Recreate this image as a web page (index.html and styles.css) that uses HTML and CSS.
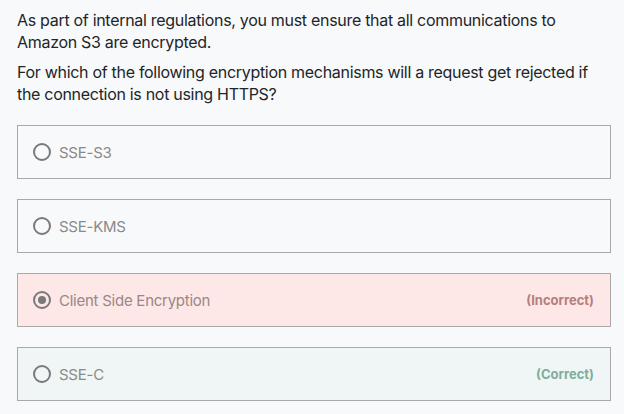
FILE: index.html
```html
<!DOCTYPE html>
<html>
<head>
<meta charset="utf-8">
<link rel="stylesheet" href="styles.css">
</head>
<body>
<div class="question">
  <p class="para">As part of internal regulations, you must ensure that all communications to Amazon S3 are encrypted.</p>
  <p class="para">For which of the following encryption mechanisms will a request get rejected if the connection is not using HTTPS?</p>
</div>
<div class="options">
  <div class="option">
    <span class="radio"></span>
    <span class="label">SSE-S3</span>
  </div>
  <div class="option">
    <span class="radio"></span>
    <span class="label">SSE-KMS</span>
  </div>
  <div class="option incorrect">
    <span class="radio checked"></span>
    <span class="label">Client Side Encryption</span>
    <span class="status">(Incorrect)</span>
  </div>
  <div class="option correct">
    <span class="radio"></span>
    <span class="label">SSE-C</span>
    <span class="status">(Correct)</span>
  </div>
</div>
</body>
</html>
```

FILE: styles.css
```css
html, body {
  margin: 0;
  padding: 0;
  background: #f8f9fa;
}
body {
  font-family: Inter, "Noto Sans", sans-serif;
  color: #212529;
  padding: 9px 13px 0 17px;
}
.question {
  margin-bottom: 20px;
}
.para {
  margin: 0 0 8px 0;
  font-size: 16px;
  line-height: 22px;
  letter-spacing: -0.3px;
}
.options {
  display: flex;
  flex-direction: column;
  gap: 20px;
}
.option {
  display: flex;
  align-items: center;
  height: 52px;
  border: 1px solid #a9a9a9;
  padding: 0 16px 0 15px;
  background: #f8f9fa;
}
.option.incorrect {
  background: #fde8e7;
}
.option.correct {
  background: #eff6f5;
}
.radio {
  width: 14px;
  height: 14px;
  border: 2px solid #7a7a7a;
  border-radius: 50%;
  box-sizing: content-box;
  margin-right: 8px;
  flex: none;
  position: relative;
}
.radio.checked::after {
  content: "";
  position: absolute;
  left: 3px;
  top: 3px;
  width: 8px;
  height: 8px;
  border-radius: 50%;
  background: #7a7a7a;
}
.label {
  font-size: 15px;
  color: #8a8a8a;
  letter-spacing: -0.25px;
}
.incorrect .label {
  color: #9a8686;
}
.status {
  margin-left: auto;
  font-size: 13px;
  font-weight: 700;
}
.incorrect .status {
  color: #b57f7d;
}
.correct .status {
  color: #7fae9d;
}
```
